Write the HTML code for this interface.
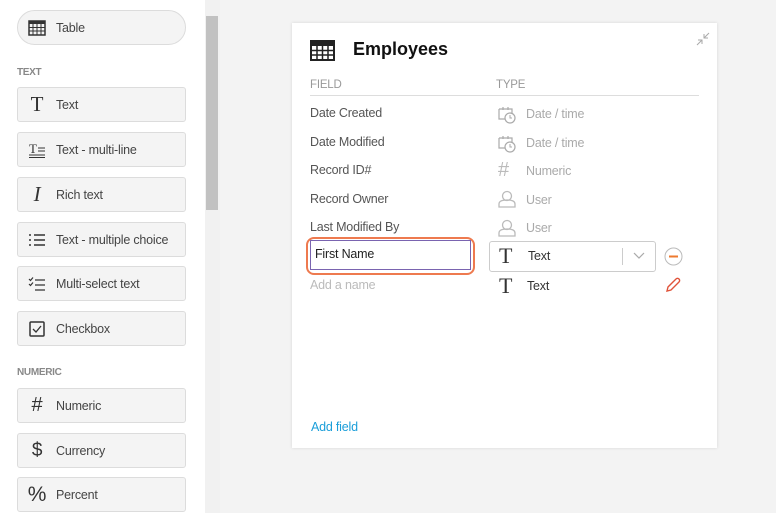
<!DOCTYPE html>
<html><head><style>
*{box-sizing:border-box;margin:0;padding:0}
body{width:776px;height:513px;overflow:hidden;background:#f3f3f3;font-family:"Liberation Sans",sans-serif;position:relative;color:#333}
.side{position:absolute;left:0;top:0;width:205px;height:513px;background:#fff}
.track{position:absolute;left:205px;top:0;width:15px;height:513px;background:#f1f1f1}
.thumb{position:absolute;left:206px;top:16px;width:12px;height:194px;background:#c1c1c1}
.btn{position:absolute;left:17px;width:169px;height:35px;background:#f4f4f4;border:1px solid #dcdcdc;border-radius:3px;font-size:12.5px;color:#444;display:flex;align-items:center;letter-spacing:-.2px}
.btn .ic{width:38px;text-align:center;font-size:18px;color:#333;display:flex;justify-content:center}
.lbl{position:absolute;left:17px;font-size:10px;color:#888;font-weight:bold;letter-spacing:-.3px}
.card{position:absolute;left:292px;top:23px;width:425px;height:425px;background:#fff;box-shadow:0 0 3px rgba(0,0,0,.12)}
.t{position:absolute;font-size:12.5px;color:#555;white-space:nowrap;letter-spacing:-.2px}
.g{color:#aaa}
.ti{position:absolute;font-family:"Liberation Serif",serif;font-size:22px;color:#333}
</style></head><body>
<div class="side"></div>
<div class="track"></div><div class="thumb"></div>
<div class="btn" style="top:10px;height:35px;border-radius:18px"><span class="ic"><svg width="18" height="16" viewBox="0 0 18 16"><rect x="1" y="1" width="16" height="14" fill="none" stroke="#333" stroke-width="1.5"/><rect x="1" y="1" width="16" height="3" fill="#333"/><path d="M1 7.5h16M1 11h16M5 4v11M9 4v11M13 4v11" stroke="#333" stroke-width="1"/></svg></span>Table</div>
<div class="lbl" style="top:67px">TEXT</div>
<div class="btn" style="top:87px"><span class="ic" style="font-family:'Liberation Serif';font-size:21px">T</span>Text</div>
<div class="btn" style="top:132px"><span class="ic"><svg width="18" height="16"><text x="1" y="11" font-family="Liberation Serif" font-size="13" fill="#333">T</text><path d="M10 6h7M10 9h7M1 13h16M1 15.5h16" stroke="#333" stroke-width="1"/></svg></span>Text - multi-line</div>
<div class="btn" style="top:177px"><span class="ic" style="font-family:'Liberation Serif';font-style:italic;font-size:21px">I</span>Rich text</div>
<div class="btn" style="top:222px"><span class="ic"><svg width="18" height="14"><path d="M1 2h2M1 7h2M1 12h2M6 2h11M6 7h11M6 12h11" stroke="#333" stroke-width="1.6"/></svg></span>Text - multiple choice</div>
<div class="btn" style="top:266px"><span class="ic"><svg width="18" height="14"><path d="M1 2l1.5 1.5L5 0.5M1 7l1.5 1.5L5 5.5M7 3h10M7 8h10M7 13h10" stroke="#333" stroke-width="1.2" fill="none"/></svg></span>Multi-select text</div>
<div class="btn" style="top:311px"><span class="ic"><svg width="16" height="16"><rect x="1" y="1" width="14" height="14" rx="1" fill="none" stroke="#333" stroke-width="1.5"/><path d="M4 8l3 3 5-6" stroke="#333" stroke-width="1.3" fill="none"/></svg></span>Checkbox</div>
<div class="lbl" style="top:367px">NUMERIC</div>
<div class="btn" style="top:388px"><span class="ic" style="font-size:20px">#</span>Numeric</div>
<div class="btn" style="top:433px"><span class="ic" style="font-size:19px">$</span>Currency</div>
<div class="btn" style="top:477px"><span class="ic" style="font-size:21px">%</span>Percent</div>

<div class="card"></div>
<svg style="position:absolute;left:310px;top:40px" width="25" height="21"><rect x="1" y="1" width="23" height="19" fill="none" stroke="#222" stroke-width="2"/><rect x="1" y="1" width="23" height="5" fill="#222"/><path d="M1 10.5h23M1 15h23M7 6v14M12.5 6v14M18 6v14" stroke="#222" stroke-width="1.5"/></svg>
<div class="t" style="left:353px;top:39px;font-size:18px;font-weight:bold;color:#111;letter-spacing:0">Employees</div>
<svg style="position:absolute;left:695px;top:31px" width="16" height="16"><path d="M2 14l5-5M3 9h4v4M14 2l-5 5M9 3v4h4" stroke="#aaa" stroke-width="1" fill="none"/></svg>
<div class="t g" style="left:310px;top:79px;font-size:11.5px;color:#999">FIELD</div>
<div class="t g" style="left:496px;top:79px;font-size:11.5px;color:#999">TYPE</div>
<div style="position:absolute;left:310px;top:95px;width:389px;height:1px;background:#ddd"></div>
<div class="t" style="left:310px;top:106px">Date Created</div>
<div class="t" style="left:310px;top:135px">Date Modified</div>
<div class="t" style="left:310px;top:163px">Record ID#</div>
<div class="t" style="left:310px;top:192px">Record Owner</div>
<div class="t" style="left:310px;top:220px">Last Modified By</div>
<svg style="position:absolute;left:497px;top:105px" width="20" height="20"><path d="M6 2v3M11 2v3M2 4h13v4M2 4v10h6" stroke="#aaa" stroke-width="1.2" fill="none"/><circle cx="13" cy="13" r="5" fill="#fff" stroke="#aaa" stroke-width="1.2"/><path d="M13 10v3h2" stroke="#aaa" fill="none"/></svg>
<svg style="position:absolute;left:497px;top:134px" width="20" height="20"><path d="M6 2v3M11 2v3M2 4h13v4M2 4v10h6" stroke="#aaa" stroke-width="1.2" fill="none"/><circle cx="13" cy="13" r="5" fill="#fff" stroke="#aaa" stroke-width="1.2"/><path d="M13 10v3h2" stroke="#aaa" fill="none"/></svg>
<div class="t g" style="left:526px;top:107px">Date / time</div>
<div class="t g" style="left:526px;top:136px">Date / time</div>
<div class="t g" style="left:498px;top:159px;font-size:20px;color:#bbb">#</div>
<div class="t g" style="left:526px;top:164px">Numeric</div>
<svg style="position:absolute;left:498px;top:190px" width="18" height="18"><circle cx="9" cy="6" r="4.5" fill="none" stroke="#bbb" stroke-width="1.3"/><path d="M1 17v-3c0-3 3-4 8-4s8 1 8 4v3z" fill="none" stroke="#bbb" stroke-width="1.3"/></svg>
<svg style="position:absolute;left:498px;top:219px" width="18" height="18"><circle cx="9" cy="6" r="4.5" fill="none" stroke="#bbb" stroke-width="1.3"/><path d="M1 17v-3c0-3 3-4 8-4s8 1 8 4v3z" fill="none" stroke="#bbb" stroke-width="1.3"/></svg>
<div class="t g" style="left:526px;top:193px">User</div>
<div class="t g" style="left:526px;top:221px">User</div>
<div style="position:absolute;left:306px;top:237px;width:169px;height:38px;border:2px solid #ee7a4f;border-radius:8px"></div>
<div style="position:absolute;left:310px;top:240px;width:161px;height:30px;border:1px solid #7a64b0;background:#fff"></div>
<div class="t" style="left:315px;top:247px;color:#222">First Name</div>
<div style="position:absolute;left:489px;top:241px;width:167px;height:31px;border:1px solid #ccc;border-radius:3px;background:#fff"></div>
<div class="ti" style="left:499px;top:243px">T</div>
<div class="t" style="left:528px;top:249px;color:#333">Text</div>
<div style="position:absolute;left:622px;top:248px;width:1px;height:17px;background:#ccc"></div>
<svg style="position:absolute;left:633px;top:252px" width="12" height="8"><path d="M1 1l5 5 5-5" stroke="#aaa" fill="none" stroke-width="1.2"/></svg>
<svg style="position:absolute;left:664px;top:247px" width="19" height="19"><circle cx="9.5" cy="9.5" r="8.5" fill="none" stroke="#bbb" stroke-width="1"/><path d="M5 9.5h9" stroke="#ee7a2f" stroke-width="2"/></svg>
<div class="t g" style="left:310px;top:278px;color:#bbb">Add a name</div>
<div class="ti" style="left:499px;top:273px">T</div>
<div class="t" style="left:527px;top:279px;color:#333">Text</div>
<svg style="position:absolute;left:665px;top:277px" width="16" height="16"><path d="M2 14l1-4 8-8a2 2 0 013 3l-8 8z" fill="none" stroke="#e0533a" stroke-width="1.4"/></svg>
<div class="t" style="left:311px;top:420px;color:#1a9ed9">Add field</div>
</body></html>
